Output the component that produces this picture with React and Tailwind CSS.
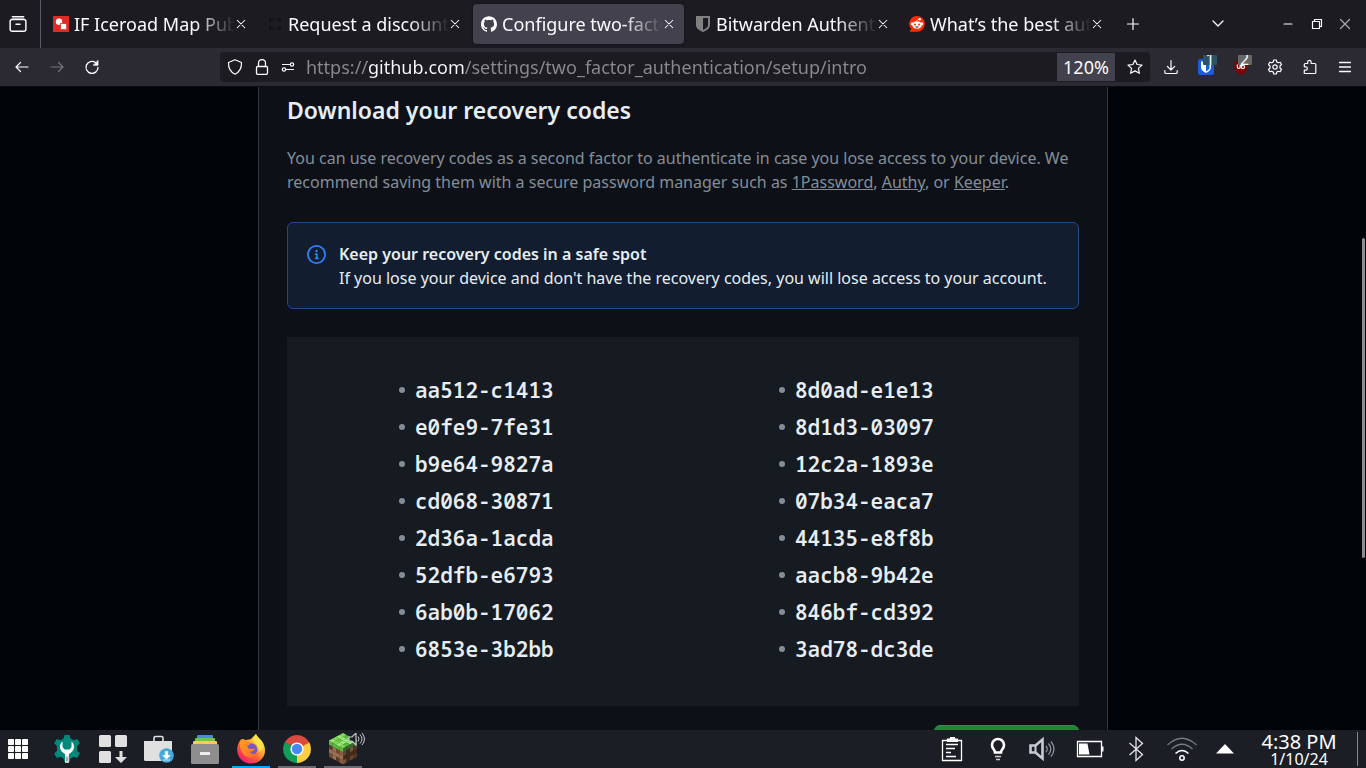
import React from "react";
import { SiGithub } from "react-icons/si";

const codesLeft = [
  "aa512-c1413",
  "e0fe9-7fe31",
  "b9e64-9827a",
  "cd068-30871",
  "2d36a-1acda",
  "52dfb-e6793",
  "6ab0b-17062",
  "6853e-3b2bb",
];
const codesRight = [
  "8d0ad-e1e13",
  "8d1d3-03097",
  "12c2a-1893e",
  "07b34-eaca7",
  "44135-e8f8b",
  "aacb8-9b42e",
  "846bf-cd392",
  "3ad78-dc3de",
];

/* Stroke icon on a 16px grid */
function Line({ children, className = "size-4", width = 1.2 }) {
  return (
    <svg
      viewBox="0 0 16 16"
      className={className}
      fill="none"
      stroke="currentColor"
      strokeWidth={width}
      strokeLinecap="round"
      strokeLinejoin="round"
      aria-hidden="true"
    >
      {children}
    </svg>
  );
}

function RoomsIcon() {
  return (
    <svg viewBox="0 0 16 16" className="size-4 shrink-0" aria-hidden="true">
      <rect width="16" height="16" rx="0.500" fill="#e02a24" />
      <circle cx="6" cy="5.8" r="3.2" fill="#fff" />
      <rect x="7.6" y="7.6" width="6" height="6" fill="#fff" stroke="#e02a24" strokeWidth="0.7" />
    </svg>
  );
}

function DarkMarkIcon() {
  return (
    <svg viewBox="0 0 16 16" className="size-4 shrink-0" fill="none" stroke="#0f0f12" strokeWidth="1.4" aria-hidden="true">
      <path d="M3 6V3h3M10 3h3v3M13 10v3h-3M6 13H3v-3" />
    </svg>
  );
}

function ShieldIcon() {
  return (
    <svg viewBox="0 0 16 16" className="size-4 shrink-0" aria-hidden="true">
      <path d="M1 0h14v9c0 3.500-3.500 5.600-7 7C4.500 14.600 1 12.500 1 9z" fill="#808080" />
      <path d="M8 2h5v7c0 2.200-2.200 3.800-5 5z" fill="#1c1b22" />
    </svg>
  );
}

function RedditIcon() {
  return (
    <svg viewBox="0 0 16 16" className="size-4 shrink-0" aria-hidden="true">
      <path d="M8 0a7.700 7.700 0 0 1 0 15.700H1.200c-.6 0-.8-.6-.4-1L2.400 13A7.700 7.700 0 0 1 8 0z" fill="#ff2a00" />
      <circle cx="3.200" cy="7.800" r="1.500" fill="#fff" />
      <circle cx="12.800" cy="7.800" r="1.500" fill="#fff" />
      <ellipse cx="8" cy="9" rx="4.800" ry="3.800" fill="#fff" />
      <circle cx="10.800" cy="3.300" r="1.200" fill="#fff" />
      <path d="M8 5.400c0-1.400.6-2 2-2.100" stroke="#fff" strokeWidth="0.7" fill="none" />
      <circle cx="5.900" cy="8.400" r="1" fill="#ff2a00" />
      <circle cx="10.100" cy="8.400" r="1" fill="#ff2a00" />
      <path d="M6 10.600h4c-.5 1.500-3.500 1.500-4 0z" fill="#3a1a14" />
    </svg>
  );
}

const tabs = [
  { title: "IF Iceroad Map Pub", icon: <RoomsIcon /> },
  { title: "Request a discount", icon: <DarkMarkIcon /> },
  { title: "Configure two-facto", icon: <SiGithub className="size-4 shrink-0" aria-hidden="true" />, active: true },
  { title: "Bitwarden Authenti", icon: <ShieldIcon /> },
  { title: "What’s the best aut", icon: <RedditIcon /> },
];

function Tab({ tab }) {
  return (
    <div
      className={
        "flex h-10 min-w-0 max-w-[211px] flex-1 items-center rounded pl-2 pr-[9px] " +
        (tab.active ? "bg-[#42414d] shadow-[0_0_3px_rgba(0,0,0,0.5)]" : "")
      }
    >
      <button role="tab" aria-selected={!!tab.active} className="flex min-w-0 flex-1 items-center gap-[5px]">
        {tab.icon}
        <span className="min-w-0 flex-1 overflow-hidden whitespace-nowrap text-left text-[18px] leading-6 [mask-image:linear-gradient(to_left,transparent,black_40px)]">
          {tab.title}
        </span>
      </button>
      <button aria-label="Close tab" className="flex w-3 shrink-0 justify-center">
        <Line className="size-3" width={1.4}>
          <path d="M3 3l10 10M13 3L3 13" />
        </Line>
      </button>
    </div>
  );
}

function TabBar() {
  return (
    <header className="flex h-12 shrink-0 items-center bg-[#1c1b22]">
      <button aria-label="Recent browsing" className="flex h-12 w-[41px] shrink-0 items-center justify-center border-r border-[#5b5a62] pr-1">
        <Line className="size-[18px]" width={1.3}>
          <path d="M3 1.500h10" />
          <path d="M2.700 3.800h10.600" />
          <rect x="1" y="4" width="14" height="10.500" rx="1.800" />
          <path d="M6.200 8.300h3.600" />
        </Line>
      </button>
      <div role="tablist" className="ml-1 flex min-w-0 flex-1 gap-[3px]">
        {tabs.map((t) => (
          <Tab key={t.title} tab={t} />
        ))}
        <button aria-label="New tab" className="flex w-9 shrink-0 items-center justify-center">
          <Line className="size-4">
            <path d="M8 2.500v11M2.500 8h11" />
          </Line>
        </button>
      </div>
      <button aria-label="List all tabs" className="mr-10 flex w-8 justify-center">
        <Line className="size-4" width={1.3}>
          <path d="M3 5l5 5 5-5" />
        </Line>
      </button>
      <div className="flex pr-[7px]">
        <button aria-label="Minimize" className="flex w-7 justify-center">
          <Line className="size-4">
            <path d="M4 8h8" />
          </Line>
        </button>
        <button aria-label="Restore" className="flex w-[29px] justify-center">
          <Line className="size-4">
            <path d="M3.500 5.500h7v7h-7zM5.500 5.300V3.500h7v7h-1.800" />
          </Line>
        </button>
        <button aria-label="Close window" className="flex w-7 justify-center text-[#a8a8b0]">
          <Line className="size-4">
            <path d="M3.500 3.500l9 9M12.500 3.500l-9 9" />
          </Line>
        </button>
      </div>
    </header>
  );
}

function Badge({ color, children }) {
  return (
    <span
      className={
        "absolute left-[5px] -top-1 flex h-[10px] w-[14px] items-end justify-center overflow-hidden rounded-[1px] text-[16px] leading-3 " + color
      }
    >
      {children}
    </span>
  );
}

function Toolbar() {
  return (
    <nav className="flex h-[39px] shrink-0 items-center border-b border-[#0c0c0f] bg-[#2b2a33]">
      <div className="flex w-[220px] shrink-0 pl-1">
        <button aria-label="Back" className="flex w-[35px] justify-center">
          <Line className="size-4">
            <path d="M14 8H2M6.500 3.500L2 8l4.500 4.500" />
          </Line>
        </button>
        <button aria-label="Forward" disabled className="flex w-[35px] justify-center text-[#75747c]">
          <Line className="size-4">
            <path d="M2 8h12M9.500 3.500L14 8l-4.500 4.500" />
          </Line>
        </button>
        <button aria-label="Reload" className="flex w-[35px] justify-center">
          <Line className="size-4" width={1.3}>
            <path d="M14 8.500A6 6 0 1 1 11.600 3.600" />
            <path d="M14 1.800v4.400H9.600z" fill="currentColor" strokeWidth="0.8" />
          </Line>
        </button>
      </div>
      <div className="flex h-[30px] min-w-0 flex-1 items-center rounded bg-[#1c1b22] pl-[7px]">
        <Line className="mr-[11px] size-4 shrink-0">
          <path d="M8 .8L14.500 3.500c.2 5-1.500 9.300-6.500 11.700C3 12.800 1.300 8.500 1.500 3.500z" />
        </Line>
        <Line className="mr-[10px] size-4 shrink-0" width={1.3}>
          <rect x="2.500" y="7.500" width="11" height="7.800" rx="1.200" />
          <path d="M4.500 7.300V4a3.500 3.500 0 0 1 7 0v3.300" />
        </Line>
        <Line className="mr-[10px] size-4 shrink-0" width={1.2}>
          <path d="M2.500 5.500h7M13.500 10.500h-7" />
          <circle cx="12" cy="5.500" r="1.700" />
          <circle cx="4" cy="10.500" r="1.700" />
        </Line>
        <input
          aria-label="Address"
          type="text"
          defaultValue="https://github.com/settings/two_factor_authentication/setup/intro"
          className="min-w-0 flex-1 bg-[linear-gradient(to_right,#8b8a90_61px,#fbfbfe_61px,#fbfbfe_158px,#8b8a90_158px)] bg-clip-text text-[18px] leading-6 text-[#8b8a90] outline-none [-webkit-text-fill-color:transparent]"
        />
        <button className="flex h-7 w-[58px] shrink-0 items-center justify-center bg-[#42414d] text-[18px] leading-6">120%</button>
        <button aria-label="Bookmark this page" className="flex w-[35px] shrink-0 justify-center pl-1">
          <Line className="size-4">
            <path d="M8 1l2.100 4.500 4.900.6-3.600 3.300 1 4.900L8 11.900l-4.400 2.400 1-4.900L1 6.100l4.900-.6z" />
          </Line>
        </button>
      </div>
      <div className="ml-1 mr-1 grid w-[208px] shrink-0 grid-cols-6 justify-items-center">
        <button aria-label="Downloads">
          <Line className="size-4">
            <path d="M8 1.500v9.300M4.300 7.300L8 11l3.700-3.700M1.800 11.500v1.700c0 .8.500 1.300 1.300 1.300h9.800c.8 0 1.300-.5 1.300-1.300v-1.700" />
          </Line>
        </button>
        <button aria-label="Bitwarden, 1 login" className="relative">
          <svg viewBox="0 0 16 16" className="size-4" aria-hidden="true">
            <rect width="16" height="16" rx="2.500" fill="#175ddc" />
            <path d="M3 2.500h10v6c0 2.500-2.500 4.300-5 5.500-2.500-1.200-5-3-5-5.500z" fill="#fff" />
            <path d="M8 4h3.500v4.500c0 1.600-1.500 2.800-3.500 3.900z" fill="#175ddc" />
          </svg>
          <Badge color="bg-[#2c5263]">1</Badge>
        </button>
        <button aria-label="uBlock Origin, 2 blocked" className="relative">
          <svg viewBox="0 0 16 16" className="size-4" aria-hidden="true">
            <path d="M8 0c2.200 1.500 4 2 6.500 2.200V7.500c0 4-2.800 6.300-6.500 8.500-3.700-2.200-6.500-4.500-6.500-8.500V2.200C4 2 5.800 1.500 8 0z" fill="#800000" />
            <path d="M4.300 5.500v2.400c0 2 2.800 2 2.800 0V5.500M8.300 4v5.500" fill="none" stroke="#fff" strokeWidth="1.100" />
            <circle cx="10" cy="8" r="1.600" fill="none" stroke="#fff" strokeWidth="1.100" />
          </svg>
          <Badge color="bg-[#666666]">2</Badge>
        </button>
        <button aria-label="Settings">
          <Line className="size-4">
            <path d="M6.700 1h2.600l.5 2 1.400.8 2-.6 1.300 2.300L13 7v2l1.500 1.500-1.300 2.300-2-.6-1.400.8-.5 2H6.700l-.5-2-1.400-.8-2 .6-1.300-2.300L3 9V7L1.500 5.500l1.300-2.300 2 .6L6.200 3z" />
            <circle cx="8" cy="8" r="2.200" />
          </Line>
        </button>
        <button aria-label="Extensions">
          <Line className="size-4">
            <path d="M2.300 14.500v-3.300h1.400a1.700 1.700 0 0 0 0-3.400H2.300V5.500c0-.6.400-1 1-1h2.400V3a1.700 1.700 0 0 1 3.400 0v1.500h3.700c.6 0 1 .4 1 1v8c0 .6-.4 1-1 1z" />
          </Line>
        </button>
        <button aria-label="Open application menu">
          <Line className="size-4" width={1.3}>
            <path d="M2.500 3.500h11M2.500 8h11M2.500 12.500h11" />
          </Line>
        </button>
      </div>
    </nav>
  );
}

function CodeList({ codes }) {
  return (
    <ul className="pl-24">
      {codes.map((c) => (
        <li key={c} className="flex h-[37px] items-center gap-[10px]">
          <span className="size-[6px] rounded-full bg-[#848d97]" />
          <span className="font-['Noto_Sans_Mono','DejaVu_Sans_Mono',monospace] text-[21px] font-semibold leading-8 text-[#e6edf3]">{c}</span>
        </li>
      ))}
    </ul>
  );
}

function Page() {
  return (
    <main className="flex min-h-0 flex-1 overflow-hidden bg-[#010409]">
      <div className="flex-1" />
      <section className="w-[850px] max-w-full shrink-0 border-x border-[#30363d] bg-[#0d1117] px-7 pt-[7px]">
        <h1 className="text-[23px] font-semibold leading-8 text-[#e6edf3]">Download your recovery codes</h1>
        <p className="mt-5 text-[16px] leading-6 text-[#848d97]">
          You can use recovery codes as a second factor to authenticate in case you lose access to your device. We recommend saving them
          with a secure password manager such as{" "}
          <a href="#1password" className="underline">1Password</a>, <a href="#authy" className="underline">Authy</a>, or{" "}
          <a href="#keeper" className="underline">Keeper</a>.
        </p>
        <div className="mt-7 flex rounded-md border border-[#1f4a8a] bg-[#121d2f] pb-[18px] pl-[19px] pr-4 pt-[19px]">
          <svg viewBox="0 0 16 16" className="mt-[3px] size-[19px] shrink-0 text-[#2f81f7]" fill="currentColor" aria-hidden="true">
            <path d="M0 8a8 8 0 1 1 16 0A8 8 0 0 1 0 8Zm8-6.500a6.500 6.500 0 1 0 0 13 6.500 6.500 0 0 0 0-13ZM6.500 7.750A.75.75 0 0 1 7.250 7h1a.75.75 0 0 1 .75.75v2.750h.25a.75.75 0 0 1 0 1.500h-2a.75.75 0 0 1 0-1.500h.25v-2h-.25a.75.75 0 0 1-.75-.75ZM8 6a1 1 0 1 1 0-2 1 1 0 0 1 0 2Z" />
          </svg>
          <div className="ml-[13px] text-[16px] leading-6 text-[#e6edf3]">
            <h2 className="font-semibold">Keep your recovery codes in a safe spot</h2>
            <p>If you lose your device and don't have the recovery codes, you will lose access to your account.</p>
          </div>
        </div>
        <div className="mt-7 grid grid-cols-2 bg-[#161b22] px-4 pb-[39px] pt-[34px]">
          <CodeList codes={codesLeft} />
          <CodeList codes={codesRight} />
        </div>
        <div className="mt-[19px] flex justify-end">
          <button aria-label="Download" className="h-[38px] w-[145px] rounded-md border border-[#2f9444] bg-[#238636]" />
        </div>
      </section>
      <div className="flex flex-1 justify-end pt-[151px]">
        <div className="mr-px h-80 w-[3px] rounded-full bg-[#8b8b90]" />
      </div>
    </main>
  );
}

function GridIcon() {
  return (
    <svg viewBox="0 0 20 20" className="size-5" fill="#fff" aria-hidden="true">
      {[0, 7, 14].map((y) => [0, 7, 14].map((x) => <rect key={x + "-" + y} x={x} y={y} width="6" height="6" rx="0.800" />))}
    </svg>
  );
}

function WrenchGearIcon() {
  return (
    <svg viewBox="0 0 28 28" className="size-7" aria-hidden="true">
      <path d="M11.500 0h5l1 3.500 3 1.700 3.800-1.200 2.500 4.300-2.800 2.900v4.500l2.800 2.900-2.500 4.300-3.800-1.200-3 1.700-1 3.500h-5l-1-3.500-3-1.700-3.800 1.200L1.200 18.600 4 15.700v-4.500L1.200 8.300 3.700 4l3.800 1.200 3-1.700z" fill="#00897b" />
      <path d="M9.500 6.500c-3.300 2.200-3.600 8.700.7 11.200L12 19v8c.6 1.300 3.400 1.300 4 0v-8l1.800-1.300c4.300-2.500 4-9 .7-11.200V12l-2 2.500h-5L9.500 12z" fill="#fff" />
      <path d="M12 21h4v6c-.6 1.300-3.400 1.300-4 0z" fill="#d7d7d7" />
      <path d="M14 22.500v3.500" stroke="#777" strokeWidth="1" />
    </svg>
  );
}

function TilesArrowIcon() {
  return (
    <svg viewBox="0 0 28 28" className="size-7" fill="#e0e0e0" aria-hidden="true">
      <rect width="12" height="12" rx="1.500" />
      <rect x="16" width="12" height="12" rx="1.500" />
      <rect y="16" width="12" height="12" rx="1.500" />
      <path d="M20.500 16h3v6H28l-6 6-6-6h4.500z" />
    </svg>
  );
}

function BagIcon() {
  return (
    <svg viewBox="0 0 30 28" className="h-7 w-[30px]" aria-hidden="true">
      <path d="M10 6V3c0-1 .5-1.500 1.500-1.500h6C18.500 1.500 19 2 19 3v3" fill="none" stroke="#e0e0e0" strokeWidth="1.600" />
      <path d="M0 6h28v18.500c0 .8-.5 1.500-1.500 1.500h-25C.5 26 0 25.300 0 24.500z" fill="#e0e0e0" />
      <circle cx="22.500" cy="20.500" r="7.300" fill="#45a8dc" />
      <path d="M21.300 16.500h2.400v4h2.500l-3.700 3.500-3.700-3.500h2.500zM19 25h7" fill="#fff" stroke="#fff" strokeWidth="0.700" />
    </svg>
  );
}

function CabinetIcon() {
  return (
    <svg viewBox="0 0 28 29" className="h-[29px] w-7" aria-hidden="true">
      <rect x="6" y="0" width="16" height="6" rx="1" fill="#5187d6" />
      <rect x="4" y="3" width="20" height="6" rx="1" fill="#6cc644" />
      <rect x="2" y="6" width="24" height="6" rx="1" fill="#ffca4f" />
      <rect x="0" y="9" width="28" height="20" rx="1.500" fill="#8e8e8e" />
      <rect x="9" y="17" width="10" height="3" rx="0.500" fill="#eee" />
    </svg>
  );
}

function FirefoxIcon() {
  return (
    <svg viewBox="0 0 28 30" className="h-[30px] w-7" aria-hidden="true">
      <defs>
        <linearGradient id="ffBody" x1="0.850" y1="0.100" x2="0.200" y2="0.900">
          <stop offset="0" stopColor="#ffe94b" />
          <stop offset="0.350" stopColor="#ffb02e" />
          <stop offset="0.650" stopColor="#ff5a3c" />
          <stop offset="1" stopColor="#f0246e" />
        </linearGradient>
        <linearGradient id="ffFox" x1="0" y1="0" x2="1" y2="1">
          <stop offset="0" stopColor="#ffa022" />
          <stop offset="1" stopColor="#ff6a28" />
        </linearGradient>
      </defs>
      <path d="M19 0c1 3.500 7 6 8.500 12.500C30 23 22.500 29.500 14 29.500S-1 22 .3 13.500C.8 10 2.300 7 4 5.500l.7 3.300C6.500 6.500 9 5.500 12 5.500c2 0 3.500-2 7-5.500z" fill="url(#ffBody)" />
      <circle cx="14" cy="15.500" r="6.300" fill="#7657c4" />
      <path d="M4 5.500C6.500 4 8 5.500 9.500 7.500c2-.2 4 .5 4.500 1-1.200.8-.6 2.200-3.500 3.200-.3 2 .9 3 2.500 3.300 2 .3 3-1 4.700 0-.7 2.300-3.500 2.800-5.200 2.700 2 2.800 6.500 3.300 9.300.6-2 5.200-8 6.500-12.300 4.300C3.500 19.500 1.300 11 4 5.500z" fill="url(#ffFox)" />
      <path d="M19 0c-3 3.500-3.500 6.500-.5 9.500 3 3 4 5.500 3.300 9 3.700-2.500 5.200-6 3.700-10C24 5 20 3.500 19 0z" fill="#ffe14d" />
    </svg>
  );
}

function ChromeIcon() {
  return (
    <svg viewBox="0 0 28 28" className="size-7" aria-hidden="true">
      <path d="M14 14L1.880 7A14 14 0 0 1 26.120 7z" fill="#db4a3f" />
      <path d="M14 14L26.120 7A14 14 0 0 1 14 28z" fill="#ffcd41" />
      <path d="M14 14v14A14 14 0 0 1 1.880 7z" fill="#119d58" />
      <path d="M14 7.400h12.320L14 14z" fill="#db4a3f" />
      <path d="M8.300 17.300L1.880 7 14 14z" fill="#119d58" />
      <path d="M19.700 17.300L14 28V14z" fill="#ffcd41" />
      <circle cx="14" cy="14" r="6.600" fill="#fff" />
      <circle cx="14" cy="14" r="5.200" fill="#4688f4" />
    </svg>
  );
}

const grassTones = ["#7ed957", "#69c545", "#98ec72", "#5cb53c"];
const dirtTones = ["#8a5f41", "#6f4a31", "#9b7152", "#593a27"];

function GrassBlockIcon() {
  const top = [];
  const sides = [];
  for (let i = 0; i < 4; i++) {
    for (let j = 0; j < 4; j++) {
      const x = 14 + (i - j) * 3.5;
      const y = (i + j) * 1.9;
      top.push(
        <path key={"t" + i + j} d={`M${x} ${y}l3.600 1.950-3.600 1.950-3.600-1.950z`} fill={grassTones[(i * 3 + j * 2 + i * j) % 4]} />
      );
      const yl = 7.6 + i * 1.9 + j * 4;
      const tone = (i * 2 + j * 3 + i * j) % 4;
      sides.push(
        <path key={"l" + i + j} d={`M${i * 3.5} ${yl}l3.600 1.950v4.100l-3.600-1.950z`} fill={j === 0 ? grassTones[3] : dirtTones[tone]} />
      );
      const yr = 15.2 - i * 1.9 + j * 4;
      sides.push(
        <path key={"r" + i + j} d={`M${14 + i * 3.5} ${yr}l3.500-1.900v4.100l-3.500 1.900z`} fill={j === 0 ? "#4d8c38" : dirtTones[(tone + 1) % 4]} />
      );
    }
  }
  return (
    <svg viewBox="0 0 36 32" className="ml-2 h-8 w-9 shrink-0" aria-hidden="true">
      {sides}
      {top}
      <path d="M14 15.200v16L28 23.600v-16z" fill="#000" opacity="0.250" />
      <path d="M20 4h3l4-4v12l-4-4h-3z" fill="#1b1e25" stroke="#c5c8cc" strokeWidth="1.200" />
      <path d="M29 3.500q2 2.500 0 5M31 1.500q4 4.500 0 9M33 0q5 6 0 12" fill="none" stroke="#c5c8cc" strokeWidth="1" />
    </svg>
  );
}

const launchers = [
  { name: "Application launcher", icon: <GridIcon />, bar: "border-transparent", cell: "w-11 pr-2" },
  { name: "System settings", icon: <WrenchGearIcon />, bar: "border-transparent" },
  { name: "Software updates", icon: <TilesArrowIcon />, bar: "border-transparent" },
  { name: "Software store", icon: <BagIcon />, bar: "border-transparent" },
  { name: "File manager", icon: <CabinetIcon />, bar: "border-transparent" },
  { name: "Firefox", icon: <FirefoxIcon />, bar: "border-[#00a8ff]" },
  { name: "Chrome", icon: <ChromeIcon />, bar: "border-[#696b70]" },
  { name: "Minecraft", icon: <GrassBlockIcon />, bar: "border-[#696b70]" },
];

function TrayIcon({ name, children }) {
  return (
    <button aria-label={name} className="flex w-[46px] justify-center">
      <svg viewBox="0 0 32 28" className="h-7 w-8" fill="none" stroke="#fff" strokeWidth="1.300" aria-hidden="true">
        {children}
      </svg>
    </button>
  );
}

function Taskbar() {
  return (
    <footer className="flex h-[38px] shrink-0 items-center justify-between bg-[#1b1e25]">
      <div className="flex">
        {launchers.map((l) => (
          <button key={l.name} aria-label={l.name} className={"flex justify-center " + (l.cell || "w-[46px] px-1")}>
            <span className={"flex h-[38px] w-full items-center justify-center border-b-2 pt-0.5 " + l.bar}>{l.icon}</span>
          </button>
        ))}
      </div>
      <div className="flex items-center">
        <TrayIcon name="Clipboard">
          <path d="M6.500 5.500h19v20h-19z" />
          <path d="M11 3.500h3V2h5v1.500h3V7H11z" fill="#fff" stroke="none" />
          <path d="M10 9.500h12M10 13.500h9M10 17.500h5M10 21.500h10" />
        </TrayIcon>
        <TrayIcon name="Brightness">
          <path d="M13 17.500c0-3-3-3.500-3-7.500a6 6 0 0 1 12 0c0 4-3 4.500-3 7.500z" strokeWidth="2.600" />
          <path d="M13 21.500h6M14 24.500h4" strokeWidth="1.500" stroke="#ccc" />
        </TrayIcon>
        <TrayIcon name="Volume">
          <path d="M2.500 10.500h5l7-6v19l-7-6h-5z" stroke="#c6cad6" strokeWidth="2.600" />
          <path d="M7.500 10v8" stroke="#c6cad6" strokeWidth="2" />
          <path d="M18 11q2.500 3 0 6M20.500 8.500q4.500 5.500 0 11M23 6.500q6 7.500 0 15" stroke="#8d909a" />
        </TrayIcon>
        <TrayIcon name="Battery">
          <path d="M3.500 6.500h24v15h-24z" />
          <path d="M28.500 11.500v5" strokeWidth="2" />
          <path d="M5 8.500h8.500l2 11H5z" fill="#fff" stroke="none" />
        </TrayIcon>
        <TrayIcon name="Bluetooth">
          <path d="M9.500 8l13 11.500-6.500 6v-23l6.500 6L9.500 20" stroke="#e4e4e6" />
        </TrayIcon>
        <TrayIcon name="Wi-Fi">
          <path d="M1.500 10q14.500-13.500 29 0" stroke="#777a80" />
          <path d="M5.500 14q10.500-9.500 21 0" stroke="#777a80" />
          <path d="M9.500 18.500q6.500-6 13 0" strokeWidth="1.500" />
          <circle cx="16" cy="23" r="2.200" strokeWidth="1.500" />
        </TrayIcon>
        <button aria-label="Show hidden icons" className="flex w-10 justify-center">
          <svg viewBox="0 0 18 10" className="h-[10px] w-[18px]" aria-hidden="true">
            <path d="M9 0l9 9.500H0z" fill="#fff" />
          </svg>
        </button>
        <div className="flex w-[113px] flex-col items-center border-r border-[#85878b] pl-1 pr-2 text-white">
          <time className="text-[20px] leading-5">4:38 PM</time>
          <time className="text-[16px] leading-[14px]">1/10/24</time>
        </div>
        <div className="w-2" />
      </div>
    </footer>
  );
}

export default function App() {
  return (
    <div className="flex h-screen flex-col overflow-hidden font-['Noto_Sans',sans-serif] text-[#fbfbfe]">
      <TabBar />
      <Toolbar />
      <Page />
      <Taskbar />
    </div>
  );
}
